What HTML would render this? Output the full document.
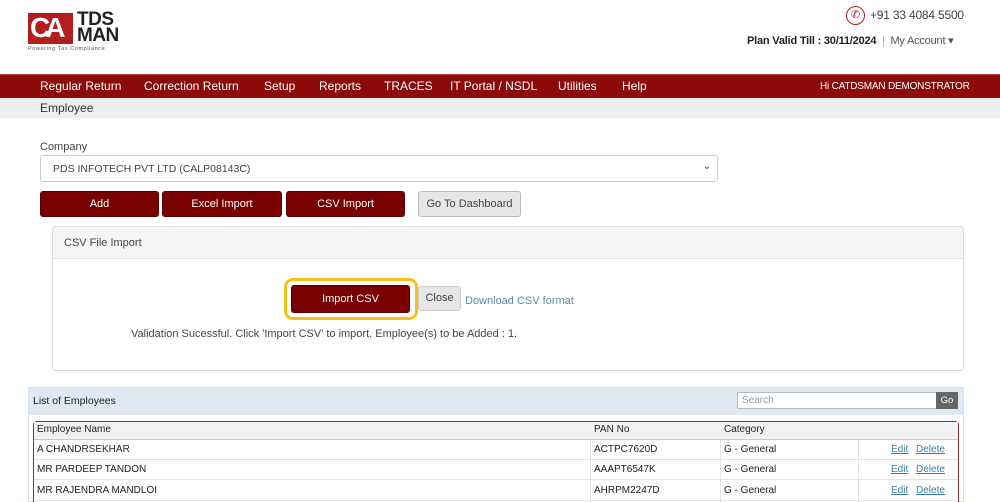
<!DOCTYPE html>
<html><head><meta charset="utf-8"><style>
*{margin:0;padding:0;box-sizing:border-box}
body{width:1000px;height:502px;overflow:hidden;background:#fff;font-family:"Liberation Sans",sans-serif;position:relative;color:#333}
.a{position:absolute}
.nav{left:0;top:74px;width:1000px;height:24px;background:#8c0a0a;border-top:1px solid #c04040}
.nav span{position:absolute;top:4px;color:#fff;font-size:12px}
.btn{position:absolute;background:#780000;color:#fff;font-size:11px;text-align:center;border-radius:3px;border:1px solid #5a0000}
.tbl{font-family:"Liberation Sans Narrow","Liberation Sans",sans-serif;font-size:10px;color:#222}
.row{position:absolute;left:34px;width:924px;height:20px;border-bottom:1px solid #e3e3e3}
.row span{position:absolute;top:4px}
.lk{color:#3a7ca5;text-decoration:underline}
</style></head><body>
<div class="a" style="left:28px;top:13px;width:45px;height:31px;background:#b21e1e"></div>
<div class="a" style="left:30px;top:13px;color:#fff;font-size:28px;font-weight:bold;letter-spacing:-5px;line-height:30px">CA</div>
<div class="a" style="left:77px;top:12px;font-size:19px;color:#222;line-height:16px;font-weight:bold;letter-spacing:-0.5px">TDS<br>MAN</div>
<div class="a" style="left:28px;top:46px;font-size:5.5px;color:#555;letter-spacing:.6px">Powering Tax Compliance</div>
<div class="a" style="left:846px;top:6px;width:19px;height:19px;border:1.5px solid #a52020;border-radius:50%;color:#a52020;font-size:11px;text-align:center;line-height:16px">✆</div>
<div class="a" style="left:870px;top:8px;font-size:12px;color:#444;letter-spacing:-0.2px">+91 33 4084 5500</div>
<div class="a" style="left:747px;top:34px;font-size:11px;color:#222;letter-spacing:-0.2px"><b style="font-weight:600">Plan Valid Till : 30/11/2024</b> <span style="color:#aaa">&nbsp;|&nbsp;</span> <span style="color:#555">My Account ▾</span></div>
<div class="a nav"><span style="left:40px">Regular Return</span><span style="left:144px">Correction Return</span><span style="left:264px">Setup</span><span style="left:319px">Reports</span><span style="left:384px">TRACES</span><span style="left:450px">IT Portal / NSDL</span><span style="left:558px">Utilities</span><span style="left:622px">Help</span><span style="left:820px;font-size:10px;top:6px;letter-spacing:-0.2px">Hi CATDSMAN DEMONSTRATOR</span></div>
<div class="a" style="left:0;top:98px;width:1000px;height:20px;background:#eceef0"></div>
<div class="a" style="left:40px;top:101px;font-size:12px">Employee</div>
<div class="a" style="left:40px;top:141px;font-size:11px;color:#444">Company</div>
<div class="a" style="left:40px;top:155px;width:678px;height:27px;border:1px solid #ccc;border-radius:3px;font-size:10.5px;padding:7px 12px;color:#444">PDS INFOTECH PVT LTD (CALP08143C)<span style="position:absolute;right:6px;top:5px;font-size:10px">⌄</span></div>
<div class="btn" style="left:40px;top:191px;width:119px;height:26px;line-height:24px">Add</div>
<div class="btn" style="left:162px;top:191px;width:120px;height:26px;line-height:24px">Excel Import</div>
<div class="btn" style="left:286px;top:191px;width:119px;height:26px;line-height:24px">CSV Import</div>
<div class="a" style="left:418px;top:191px;width:103px;height:26px;background:#e6e6e6;border:1px solid #bbb;border-radius:3px;font-size:11px;text-align:center;line-height:24px;color:#444">Go To Dashboard</div>
<div class="a" style="left:52px;top:226px;width:912px;height:145px;border:1px solid #ddd;border-radius:3px"></div>
<div class="a" style="left:53px;top:227px;width:910px;height:32px;background:#f5f5f5;border-bottom:1px solid #e3e3e3;font-size:11px;padding:10px 11px;color:#444">CSV File Import</div>
<div class="a" style="left:284px;top:278px;width:134px;height:42px;border:3px solid #f2c21b;border-radius:9px"></div>
<div class="btn" style="left:291px;top:285px;width:119px;height:28px;line-height:26px">Import CSV</div>
<div class="a" style="left:418px;top:286px;width:43px;height:25px;background:#e6e6e6;border:1px solid #ccc;border-radius:3px;font-size:11px;text-align:center;line-height:23px;color:#444">Close</div>
<div class="a" style="left:465px;top:295px;font-size:11px;color:#5a8ab0">Download CSV format</div>
<div class="a" style="left:131px;top:328px;font-size:11px;color:#444">Validation Sucessful. Click 'Import CSV' to import. Employee(s) to be Added : 1.</div>
<div class="a" style="left:28px;top:387px;width:936px;height:115px;border:1px solid #d8e0ea"></div>
<div class="a" style="left:29px;top:388px;width:934px;height:27px;background:#e0e8f3"></div>
<div class="a tbl" style="left:33px;top:395px;font-size:10.5px">List of Employees</div>
<div class="a" style="left:737px;top:392px;width:200px;height:17px;background:#fff;border:1px solid #bbb;font-size:10px;padding:2px 4px;color:#999">Search</div>
<div class="a" style="left:936px;top:392px;width:22px;height:17px;background:#666;color:#fff;font-size:9.5px;text-align:center;line-height:17px">Go</div>
<div class="a" style="left:33px;top:421px;width:926px;height:81px;border:1px solid #8a3030;border-bottom:none;border-radius:4px 4px 0 0;background:#fff"></div>
<div class="tbl">
<div class="row" style="top:422px;height:18px;background:#f2f2f2;border-bottom:1px solid #ccc"><span style="left:3px;top:2px">Employee Name</span><span style="left:560px;top:2px">PAN No</span><span style="left:690px;top:2px">Category</span></div>
<div class="row" style="top:440px"><span style="left:3px">A CHANDRSEKHAR</span><span style="left:560px">ACTPC7620D</span><span style="left:690px">G - General</span><span class="lk" style="left:857px">Edit</span><span class="lk" style="left:882px">Delete</span></div>
<div class="row" style="top:460px"><span style="left:3px">MR PARDEEP TANDON</span><span style="left:560px">AAAPT6547K</span><span style="left:690px">G - General</span><span class="lk" style="left:857px">Edit</span><span class="lk" style="left:882px">Delete</span></div>
<div class="row" style="top:481px"><span style="left:3px">MR RAJENDRA MANDLOI</span><span style="left:560px">AHRPM2247D</span><span style="left:690px">G - General</span><span class="lk" style="left:857px">Edit</span><span class="lk" style="left:882px">Delete</span></div>
</div>
<div class="a" style="left:590px;top:440px;width:1px;height:62px;background:#e3e3e3"></div>
<div class="a" style="left:720px;top:440px;width:1px;height:62px;background:#e3e3e3"></div>
<div class="a" style="left:858px;top:440px;width:1px;height:62px;background:#e3e3e3"></div>
</body></html>
